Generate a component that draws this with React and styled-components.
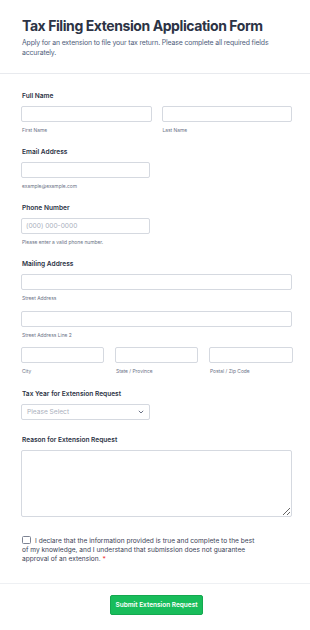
import React from 'react'
import styled, { createGlobalStyle } from 'styled-components'

// #2c3345 --> Ink
// #57647e --> Slate
// #d3d7df --> Border
// #18bd5b --> Green

const GlobalStyle = createGlobalStyle`
  * { box-sizing: border-box; }
  body {
    margin: 0;
    background: #fff;
    font-family: Inter, "Noto Sans", sans-serif;
    color: #2c3345;
  }
`

const Page = styled.div`
  width: 310px;
  background: #fff;
`

const Header = styled.div`
  padding: 17px 21px 15px 22px;
  border-bottom: 1px solid #e8eaee;
`

const Title = styled.h1`
  margin: 0;
  font-size: 14px;
  line-height: 18px;
  font-weight: 700;
  color: #2c3345;
  letter-spacing: -0.42px;
`

const Subtitle = styled.p`
  margin: 3px 0 0;
  font-size: 6.9px;
  line-height: 10px;
  color: #4f5e7b;
  letter-spacing: -0.15px;
`

const Body = styled.div`
  padding: 16.5px 18px 19px 21px;
  display: flex;
  flex-direction: column;
`

const Field = styled.div`
  display: flex;
  flex-direction: column;
  margin-bottom: ${({ gap }) => gap ?? 13}px;
`

const Label = styled.label`
  font-size: 6.6px;
  line-height: 10px;
  font-weight: 600;
  color: #2c3345;
  padding-left: 1px;
  margin-bottom: 5px;
`

const Row = styled.div`
  display: grid;
  grid-template-columns: ${({ cols }) => cols};
  column-gap: ${({ gap }) => gap}px;
`

const Col = styled.div`
  display: flex;
  flex-direction: column;
  margin-bottom: ${({ mb }) => mb ?? 0}px;
`

const Input = styled.input`
  width: ${({ w }) => (w ? `${w}px` : '100%')};
  height: 16px;
  border: 1px solid #d5d9e0;
  border-radius: 2px;
  padding: 0 4px;
  font-family: inherit;
  font-size: 6.6px;
  color: #2c3345;
  outline: none;
  &::placeholder { color: #aab0bd; }
`

const Sub = styled.span`
  margin-top: 4px;
  font-size: 4.9px;
  line-height: 8px;
  color: #6b7286;
  padding-left: 1px;
`

const SelectBox = styled.div`
  width: 129px;
  height: 16px;
  border: 1px solid #d5d9e0;
  border-radius: 2px;
  padding: 0 5px 0 5px;
  display: flex;
  align-items: center;
  justify-content: space-between;
  font-size: 6.6px;
  color: #aab0bd;
`

const TextArea = styled.textarea`
  display: block;
  width: 100%;
  height: 67px;
  border: 1px solid #d5d9e0;
  border-radius: 2px;
  font-family: inherit;
  font-size: 6.6px;
  padding: 4px;
  outline: none;
`

const Declare = styled.div`
  margin-top: 19px;
  width: 238px;
  padding-left: 1px;
  font-size: 6.6px;
  line-height: 9px;
  color: #3b4256;
`

const Box = styled.span`
  display: inline-block;
  width: 9px;
  height: 8px;
  border: 1px solid #7d8393;
  border-radius: 1.5px;
  margin-right: 4px;
  vertical-align: -1px;
`

const Star = styled.span`
  color: #f23a3c;
  margin-left: 2px;
`

const Footer = styled.div`
  border-top: 1px solid #eef0f3;
  padding: 11px 0 16px;
  display: flex;
  justify-content: center;
`

const Button = styled.button`
  width: 93px;
  height: 20px;
  margin-left: 3px;
  background: #18bd5b;
  border: 1px solid #14a84f;
  border-radius: 2px;
  color: #fff;
  font-family: inherit;
  font-size: 6.5px;
  font-weight: 600;
  padding: 0;
`

export default function App() {
  return (
    <Page>
      <GlobalStyle />
      <Header>
        <Title>Tax Filing Extension Application Form</Title>
        <Subtitle>
          Apply for an extension to file your tax return. Please complete all required fields accurately.
        </Subtitle>
      </Header>
      <Body>
        <Field>
          <Label>Full Name</Label>
          <Row cols="1fr 1fr" gap={10}>
            <Col>
              <Input />
              <Sub>First Name</Sub>
            </Col>
            <Col>
              <Input />
              <Sub>Last Name</Sub>
            </Col>
          </Row>
        </Field>
        <Field>
          <Label>Email Address</Label>
          <Input w={129} />
          <Sub>example@example.com</Sub>
        </Field>
        <Field>
          <Label>Phone Number</Label>
          <Input w={129} placeholder="(000) 000-0000" />
          <Sub>Please enter a valid phone number.</Sub>
        </Field>
        <Field gap={14}>
          <Label>Mailing Address</Label>
          <Col mb={9}>
            <Input />
            <Sub>Street Address</Sub>
          </Col>
          <Col mb={8}>
            <Input />
            <Sub>Street Address Line 2</Sub>
          </Col>
          <Row cols="83px 83px 84px" gap={11}>
            <Col>
              <Input />
              <Sub>City</Sub>
            </Col>
            <Col>
              <Input />
              <Sub>State / Province</Sub>
            </Col>
            <Col>
              <Input />
              <Sub>Postal / Zip Code</Sub>
            </Col>
          </Row>
        </Field>
        <Field gap={15}>
          <Label>Tax Year for Extension Request</Label>
          <SelectBox>
            <span>Please Select</span>
            <svg width="6" height="4" viewBox="0 0 6 4">
              <path d="M0.8 0.8 L3 3 L5.2 0.8" fill="none" stroke="#6b7286" strokeWidth="1" />
            </svg>
          </SelectBox>
        </Field>
        <Field gap={0}>
          <Label>Reason for Extension Request</Label>
          <TextArea />
        </Field>
        <Declare>
          <Box />
          I declare that the information provided is true and complete to the best of my knowledge, and I understand that submission does not guarantee approval of an extension.
          <Star>*</Star>
        </Declare>
      </Body>
      <Footer>
        <Button>Submit Extension Request</Button>
      </Footer>
    </Page>
  )
}
